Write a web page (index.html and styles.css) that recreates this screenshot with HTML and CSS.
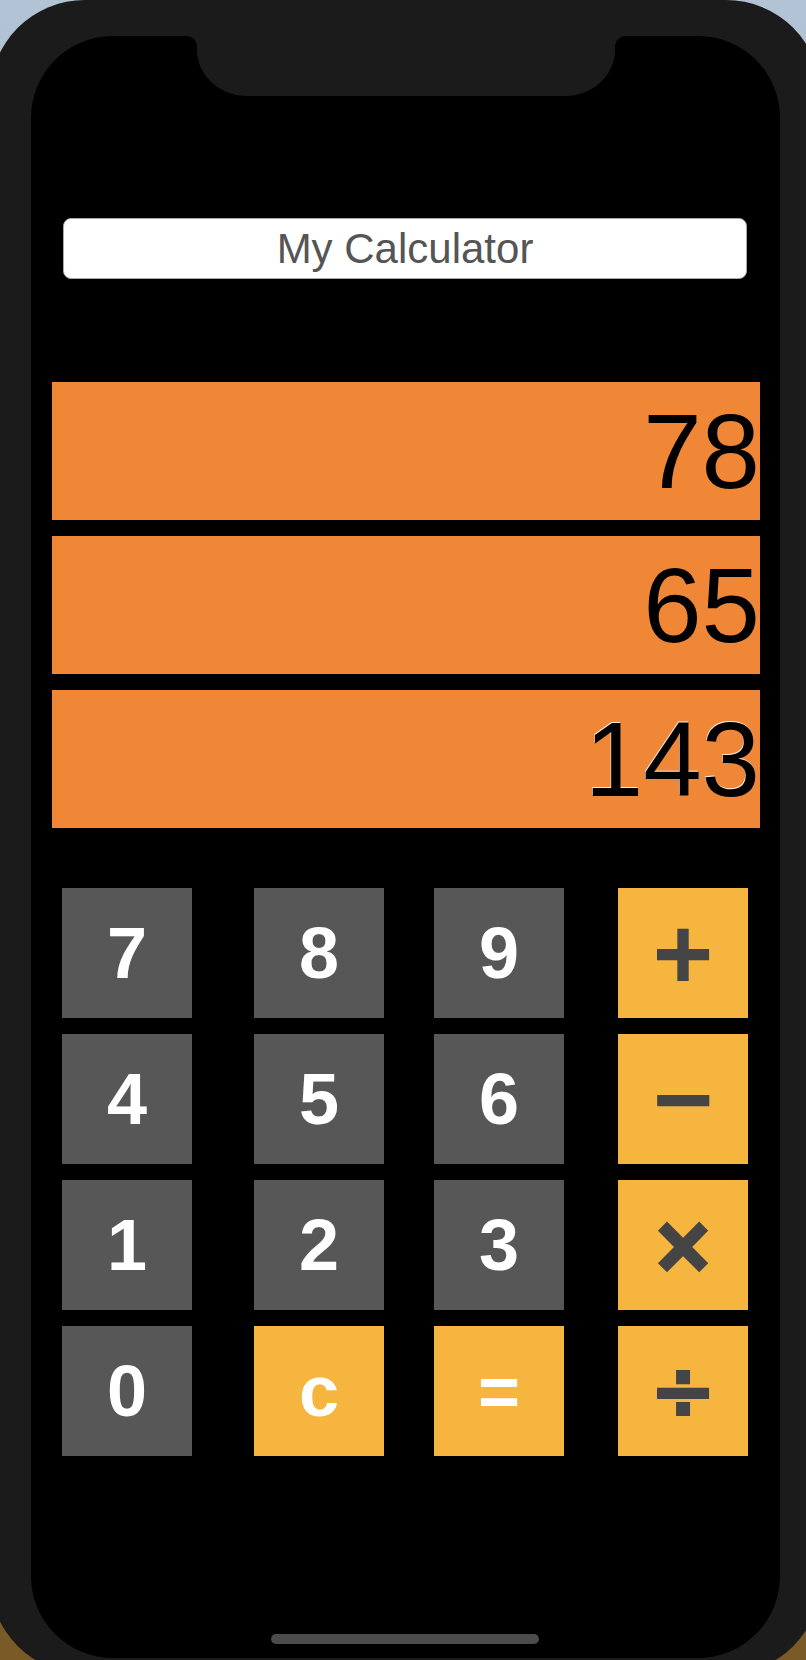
FILE: index.html
```html
<!DOCTYPE html>
<html lang="en">
<head>
<meta charset="utf-8">
<title>My Calculator</title>
<link rel="stylesheet" href="styles.css">
</head>
<body>
<div class="phone">
  <div class="screen">
    <div class="notch"></div>
    <div class="title">My Calculator</div>
    <div class="display">
      <div class="readout">78</div>
      <div class="readout">65</div>
      <div class="readout result">143</div>
    </div>
    <div class="keypad">
      <div class="key num">7</div>
      <div class="key num">8</div>
      <div class="key num">9</div>
      <div class="key op">+</div>
      <div class="key num">4</div>
      <div class="key num">5</div>
      <div class="key num">6</div>
      <div class="key op">−</div>
      <div class="key num">1</div>
      <div class="key num">2</div>
      <div class="key num">3</div>
      <div class="key op times">×</div>
      <div class="key num">0</div>
      <div class="key fn">c</div>
      <div class="key fn">=</div>
      <div class="key op">÷</div>
    </div>
    <div class="home-indicator"></div>
  </div>
</div>
</body>
</html>
```

FILE: styles.css
```css
html, body {
  margin: 0;
  padding: 0;
}
body {
  width: 806px;
  height: 1660px;
  overflow: hidden;
  background: linear-gradient(180deg, #b3c3d6 0%, #a3b4c8 35%, #6e6450 70%, #7a5a26 100%);
  font-family: "Liberation Sans", Arial, sans-serif;
}
.phone {
  width: 831px;
  height: 1674px;
  margin-left: -10px;
  box-sizing: border-box;
  padding: 36px 41px 16px 41px;
  background: #1b1b1b;
  border-radius: 95px;
}
.screen {
  position: relative;
  height: 1622px;
  box-sizing: border-box;
  padding-top: 182px;
  background: #000;
  border-radius: 82px;
}
.notch {
  position: absolute;
  top: 0;
  left: 166px;
  width: 418px;
  height: 60px;
  background: #1b1b1b;
  border-radius: 0 0 50px 50px / 0 0 46px 46px;
}
.notch::before,
.notch::after {
  content: "";
  position: absolute;
  top: 0;
  width: 10px;
  height: 10px;
}
.notch::before {
  left: -10px;
  background: radial-gradient(circle at 0 100%, transparent 9.5px, #1b1b1b 10px);
}
.notch::after {
  right: -10px;
  background: radial-gradient(circle at 100% 100%, transparent 9.5px, #1b1b1b 10px);
}
.title {
  height: 61px;
  box-sizing: border-box;
  margin: 0 33px 0 32px;
  background: #fff;
  border: 1px solid #a8a8a8;
  border-radius: 8px;
  color: #555;
  font-size: 42px;
  line-height: 59px;
  text-align: center;
}
.display {
  display: flex;
  flex-direction: column;
  gap: 16px;
  margin: 103px 20px 0 21px;
}
.readout {
  height: 138px;
  display: flex;
  align-items: center;
  justify-content: flex-end;
  background: #f08737;
  color: #000;
  font-size: 105px;
  line-height: 1;
}
.result {
  text-shadow: -0.5px -1px 0 rgba(255, 255, 255, 0.85);
}
.keypad {
  display: grid;
  grid-template-columns: 192px 180px 184px 130px;
  grid-auto-rows: 130px;
  row-gap: 16px;
  margin: 60px 0 0 31px;
}
.key {
  width: 130px;
  height: 130px;
  display: flex;
  align-items: center;
  justify-content: center;
  font-size: 72px;
  font-weight: bold;
  line-height: 1;
}
.num {
  background: #575757;
  color: #fff;
}
.fn {
  background: #f5b53f;
  color: #fff;
}
.op {
  background: #f5b53f;
  color: #454545;
  font-family: "DejaVu Sans", sans-serif;
  font-size: 80px;
  -webkit-text-stroke: 2px #454545;
}
.times {
  font-size: 76px;
  -webkit-text-stroke: 4px #454545;
}
.home-indicator {
  position: absolute;
  left: 240px;
  bottom: 14px;
  width: 268px;
  height: 10px;
  border-radius: 5px;
  background: #4b4b4b;
}
```
